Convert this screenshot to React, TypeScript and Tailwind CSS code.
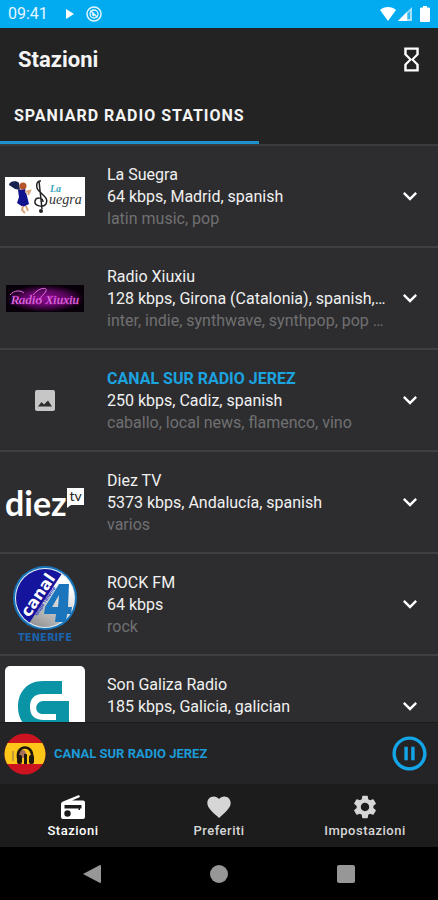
import React, { useState } from 'react';
import { MdExpandMore, MdFavorite, MdHourglassEmpty, MdPauseCircleOutline, MdSettings } from 'react-icons/md';

const SuegraLogo = () => (
  <svg viewBox="0 0 80 39" className="w-full" role="img" aria-label="La Suegra">
    <rect width="80" height="39" fill="#fff" />
    {/* dancer */}
    <path d="M13 13 L20 12 L22 19 L24 27 L18 30 L12 26 L14 20 Z" fill="#10138c" />
    <path d="M4 8 C4 4 12 3 14 6 L15 13 L10 12 Z" fill="#18224f" />
    <circle cx="18" cy="9" r="3.500" fill="#b4532c" />
    <path d="M20 15 L25 14 L23 18 M18 29 L17 33 L20 36 M21 29 L23 34" fill="none" stroke="#d9a277" strokeWidth="2" />
    {/* clef that starts the word */}
    <path
      d="M36 4 C31 3 30 11 35 15 C39 19 44 22 41 27 C38 31 29 29 30 24 C31 20 38 20 38 25 M34 4 L37 32"
      fill="none"
      stroke="#222"
      strokeWidth="1.500"
    />
    <circle cx="36" cy="34" r="2" fill="#222" />
    <text x="44" y="27" fill="#333" fontSize="14" fontStyle="italic" fontFamily="Liberation Serif, serif">uegra</text>
    <text x="45" y="15" fill="#3ba6bd" fontSize="10" fontWeight="700" fontStyle="italic" fontFamily="Liberation Serif, serif">La</text>
  </svg>
);

const XiuxiuLogo = () => (
  <svg viewBox="0 0 78 27" className="w-[78px]" role="img" aria-label="Radio Xiuxiu">
    <defs>
      <radialGradient id="xiuxiuGlow">
        <stop offset="0" stopColor="#8c0c8e" />
        <stop offset="0.55" stopColor="#5c0660" />
        <stop offset="1" stopColor="#080009" />
      </radialGradient>
    </defs>
    <rect width="78" height="27" fill="#080009" />
    <rect width="78" height="27" fill="url(#xiuxiuGlow)" />
    <text
      x="39"
      y="19"
      fill="#f9b4f6"
      stroke="#c01fc4"
      strokeWidth="0.4"
      fontSize="13"
      fontStyle="italic"
      textAnchor="middle"
      fontFamily="Liberation Serif, serif"
    >
      Radio Xiuxiu
    </text>
    <path d="M4 10 C8 5 15 5 18 8 M27 10 C33 2 42 2 40 6 C39 9 35 11 33 15" fill="none" stroke="#e66ae4" strokeWidth="1" />
  </svg>
);

const PlaceholderLogo = () => (
  <svg viewBox="0 0 20 21" className="w-5" aria-hidden="true">
    <rect width="20" height="21" rx="2" fill="#c6c6c6" />
    <path d="M3 16.500 L6.500 12 L9 14.500 L13 10.500 L17 16.500 Z" fill="#2d2d2f" />
  </svg>
);

const DiezLogo = () => (
  <svg viewBox="0 0 80 32" className="w-full" role="img" aria-label="Diez TV">
    <text x="0" y="30" fill="#fff" fontSize="34" fontWeight="700" fontFamily="Lato, sans-serif">diez</text>
    <path d="M62 2 H79 V19 H66 L62 22 Z" fill="#fff" />
    <text x="70.500" y="15" fill="#222" fontSize="14" textAnchor="middle" fontFamily="Lato, sans-serif">tv</text>
  </svg>
);

const TenerifeLogo = () => (
  <svg viewBox="0 0 66 76" className="w-[66px]" role="img" aria-label="Canal 4 Tenerife">
    <defs>
      <clipPath id="tenerifeDisc">
        <circle cx="33" cy="32" r="29" />
      </clipPath>
      <linearGradient id="tenerifeSilver" x1="0.8" y1="0.3" x2="0.4" y2="1">
        <stop offset="0" stopColor="#fff" />
        <stop offset="1" stopColor="#8c8c8c" />
      </linearGradient>
    </defs>
    <circle cx="33" cy="32" r="32" fill="#1976bb" />
    <circle cx="33" cy="32" r="30" fill="#e4eef5" />
    <g clipPath="url(#tenerifeDisc)">
      <rect width="66" height="66" fill="url(#tenerifeSilver)" />
      <path d="M0 0 H55 L14 62 H0 Z" fill="#14149c" />
      <text
        x="17"
        y="52"
        fill="#fff"
        fontSize="16"
        fontWeight="700"
        transform="rotate(-56 17 52)"
        fontFamily="DejaVu Sans, sans-serif"
      >
        canal
      </text>
      <text x="25" y="50" fill="#2b35c4" fontSize="5" fontWeight="700" transform="rotate(-56 25 50)" fontFamily="Roboto, sans-serif">
        Grupo Tenerife
      </text>
    </g>
    <path
      fillRule="evenodd"
      d="M47 18 H57 L56 41 H60 L59 48 H55 L54 56 H43 L44 48 H32 L33 41 Z M47 29 L40 41 H46 Z"
      fill="#1b75bd"
    />
    <text x="33" y="75" fill="#1b62ad" fontSize="10" fontWeight="700" textAnchor="middle" fontFamily="DejaVu Sans, sans-serif">
      TENERIFE
    </text>
  </svg>
);

const GalizaLogo = () => (
  <svg viewBox="0 0 80 80" className="w-full" role="img" aria-label="Son Galiza Radio">
    <rect width="80" height="80" rx="5" fill="#fff" />
    <path
      d="M57 15 V28 H38 C28 28 25 34 25 41 C25 49 29 54 39 54 H51 V48 H38 C29 48 29 36 38 35 H64 V66 H38 C22 66 13 55 13 41 C13 26 22 15 38 15 Z"
      fill="#0b94a5"
    />
  </svg>
);

const SpainBadge = () => (
  <svg viewBox="0 0 42 42" className="size-[42px] shrink-0" aria-hidden="true">
    <defs>
      <clipPath id="spainDisc">
        <circle cx="21" cy="21" r="20.500" />
      </clipPath>
    </defs>
    <g clipPath="url(#spainDisc)">
      <rect width="42" height="42" fill="#cb1420" />
      <rect y="10" width="42" height="21" fill="#ffc61a" />
    </g>
    <path d="M9 18 V28" stroke="#c39a3a" strokeWidth="2" />
    <circle cx="18" cy="21" r="4" fill="#a4705b" />
    <path d="M14 25 C12 11 30 11 28 25" fill="none" stroke="#20170c" strokeWidth="2.500" />
    <rect x="13" y="22" width="5" height="9" rx="2" fill="#20170c" />
    <rect x="20" y="21" width="3" height="10" fill="#20170c" />
    <rect x="25" y="22" width="5" height="9" rx="2" fill="#20170c" />
  </svg>
);

const RadioIcon = ({ size }: { size: number }) => (
  <svg viewBox="0 0 28 28" width={size} height={size} aria-hidden="true">
    <path
      fillRule="evenodd"
      d="M20 2 L21 4 L13 7.500 H24 Q26 7.500 26 9.500 V24 Q26 26 24 26 H4 Q2 26 2 24 V11 Q2 9 4 8.400 Z M5.500 12 V15.500 H19.500 V17 H21 V15.500 H22.500 V12 Z"
      fill="currentColor"
    />
    <circle cx="8.500" cy="20.500" r="3.200" fill="#1c1c1c" />
  </svg>
);

const STATIONS = [
  { id: 'suegra', name: 'La Suegra', info: '64 kbps, Madrid, spanish', tags: 'latin music, pop', logo: SuegraLogo },
  {
    id: 'xiuxiu',
    name: 'Radio Xiuxiu',
    info: '128 kbps, Girona (Catalonia), spanish, catalan',
    tags: 'inter, indie, synthwave, synthpop, pop world',
    logo: XiuxiuLogo
  },
  {
    id: 'canal-sur',
    name: 'CANAL SUR RADIO JEREZ',
    info: '250 kbps, Cadiz, spanish',
    tags: 'caballo, local news, flamenco, vino',
    logo: PlaceholderLogo
  },
  { id: 'diez', name: 'Diez TV', info: '5373 kbps, Andalucía, spanish', tags: 'varios', logo: DiezLogo },
  { id: 'rock-fm', name: 'ROCK FM', info: '64 kbps', tags: 'rock', logo: TenerifeLogo },
  { id: 'galiza', name: 'Son Galiza Radio', info: '185 kbps, Galicia, galician', tags: '', logo: GalizaLogo }
];

const TABS = [
  { id: 'stazioni', label: 'Stazioni', icon: RadioIcon },
  { id: 'preferiti', label: 'Preferiti', icon: MdFavorite },
  { id: 'impostazioni', label: 'Impostazioni', icon: MdSettings }
];

const StatusBar = () => (
  <div className="flex h-7 shrink-0 items-center bg-[#02aaef] pl-2 pr-2 text-[#e4f6ff]">
    <span className="text-base">09:41</span>
    <svg viewBox="0 0 8 10" className="ml-[18px] h-[10px] w-2" fill="#fff" aria-hidden="true">
      <path d="M0 0 L8 5 L0 10 Z" />
    </svg>
    <svg viewBox="0 0 16 16" className="ml-3 size-4" fill="none" stroke="currentColor" aria-hidden="true">
      <circle cx="8" cy="8" r="7" strokeWidth="1.500" />
      <circle cx="8" cy="8" r="4" strokeWidth="1.300" />
      <path d="M4.500 4.500 L11.500 11.500 M6 8 L8 10" strokeWidth="1.500" />
    </svg>
    <div className="ml-auto flex items-center">
      <svg viewBox="0 0 16 14" className="h-[14px] w-4" fill="#fff" aria-hidden="true">
        <path d="M0 3 C4 -1 12 -1 16 3 L8 14 Z" />
      </svg>
      <svg viewBox="0 0 14 14" className="ml-0.5 size-[14px]" aria-hidden="true">
        <path d="M14 0 V14 H0 Z" fill="#a9e1fa" />
        <path d="M9 5 V14 H0 Z" fill="#fff" />
        <path d="M9.500 6.500 L12 4 V12 H9.500 Z" fill="#31b9f2" />
      </svg>
      <svg viewBox="0 0 10 16" className="ml-2 h-4 w-[10px]" fill="#fff" aria-hidden="true">
        <path d="M3 0 H7 V1.500 H9 Q10 1.500 10 3 V15 Q10 16 9 16 H1 Q0 16 0 15 V3 Q0 1.500 1 1.500 H3 Z" />
      </svg>
    </div>
  </div>
);

const StationRow = ({ station, isPlaying }: { station: (typeof STATIONS)[number]; isPlaying: boolean }) => {
  const Logo = station.logo;

  return (
    <li className="flex h-[102px] shrink-0 items-center border-b-2 border-[#3f3f41] pl-[5px] pr-[14px]">
      <div className="flex w-20 shrink-0 items-center justify-center">
        <Logo />
      </div>
      <div className="ml-[22px] min-h-[68px] min-w-0 flex-1 pt-[2px] text-base leading-[22px] text-[#f1f1f1]">
        <h2 className={isPlaying ? 'truncate font-bold text-[#1ba3e0]' : 'truncate'}>{station.name}</h2>
        <p className="truncate">{station.info}</p>
        {station.tags && <p className="truncate text-[#707072]">{station.tags}</p>}
      </div>
      <button className="ml-2 shrink-0 text-white" aria-label={`Espandi ${station.name}`}>
        <MdExpandMore size={28} />
      </button>
    </li>
  );
};

const App: React.FC = () => {
  const [activeTab, setActiveTab] = useState('stazioni');
  const playing = 'canal-sur';

  return (
    <div className="flex h-screen flex-col overflow-hidden bg-[#2d2d2f] font-[Roboto,sans-serif]">
      <StatusBar />

      <header className="shrink-0 border-b-2 border-[#3b3b3d] bg-[#232324] text-[#f4f4f4]">
        <div className="flex h-[62px] items-center justify-between pl-[18px] pr-3">
          <h1 className="text-[22px] font-bold">Stazioni</h1>
          <button className="text-white" aria-label="Timer">
            <MdHourglassEmpty size={29} />
          </button>
        </div>
        <div className="flex">
          <button className="h-[54px] border-b-3 border-[#1c93cf] px-[14px] text-base font-bold tracking-[1px]">
            SPANIARD RADIO STATIONS
          </button>
        </div>
      </header>

      <ul className="flex min-h-0 flex-1 flex-col overflow-hidden">
        {STATIONS.map((station) => (
          <StationRow key={station.id} station={station} isPlaying={station.id === playing} />
        ))}
      </ul>

      <div className="flex h-[62px] shrink-0 items-center border-t border-[#1b1b1c] bg-[#242426] pl-1 pr-2">
        <SpainBadge />
        <span className="ml-2 flex-1 truncate text-[13px] font-bold text-[#1c9bd8]">CANAL SUR RADIO JEREZ</span>
        <button className="text-[#14a5e8]" aria-label="Pausa">
          <MdPauseCircleOutline size={41} />
        </button>
      </div>

      <nav className="grid h-[63px] shrink-0 grid-cols-3 bg-[#1c1c1c]">
        {TABS.map((tab) => {
          const IconComponent = tab.icon;
          const isActive = activeTab === tab.id;

          return (
            <button
              key={tab.id}
              onClick={() => setActiveTab(tab.id)}
              className={`flex flex-col items-center justify-end pb-[6px] text-[13px] leading-5 font-medium tracking-[0.5px] ${
                isActive ? 'text-white' : 'text-[#d6d6d6]'
              }`}
            >
              <IconComponent size={28} />
              <span>{tab.label}</span>
            </button>
          );
        })}
      </nav>

      <div className="flex h-[53px] shrink-0 items-center justify-between bg-black px-[83px] text-[#979797]">
        <button aria-label="Indietro">
          <svg viewBox="0 0 18 20" className="h-5 w-[18px]" fill="currentColor">
            <path d="M17 1 Q18 1 18 2 V18 Q18 19 17 19 L0 10 Z" />
          </svg>
        </button>
        <button className="size-[18px] rounded-full bg-[#979797]" aria-label="Home" />
        <button className="size-[18px] rounded-xs bg-[#979797]" aria-label="Recenti" />
      </div>
    </div>
  );
};

export default App;
